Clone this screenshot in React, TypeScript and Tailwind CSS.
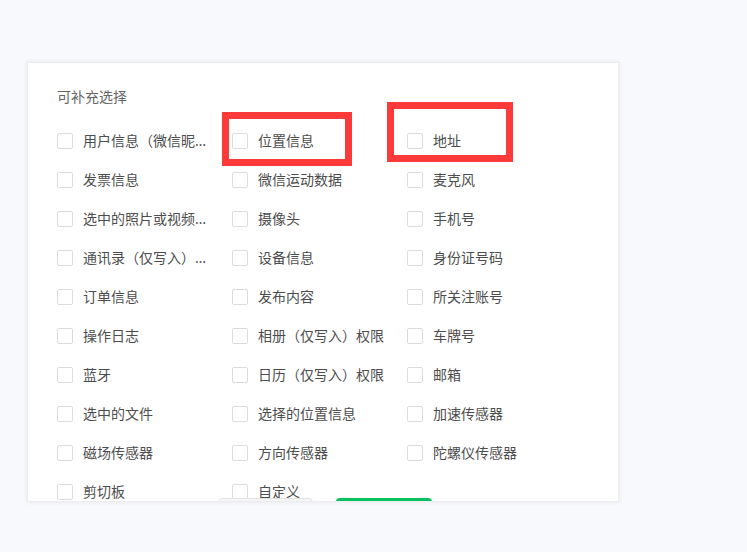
import React from "react";

const items = [
  "用户信息（微信昵称、头像）", "位置信息", "地址",
  "发票信息", "微信运动数据", "麦克风",
  "选中的照片或视频信息", "摄像头", "手机号",
  "通讯录（仅写入）权限", "设备信息", "身份证号码",
  "订单信息", "发布内容", "所关注账号",
  "操作日志", "相册（仅写入）权限", "车牌号",
  "蓝牙", "日历（仅写入）权限", "邮箱",
  "选中的文件", "选择的位置信息", "加速传感器",
  "磁场传感器", "方向传感器", "陀螺仪传感器",
  "剪切板", "自定义",
];

export default function App() {
  return (
    <div
      className="relative w-[747px] h-[552px] bg-[#f8f9fc] overflow-hidden pl-[27px] pt-[62px]"
      style={{ fontFamily: '"Noto Sans", "Noto Sans CJK SC", sans-serif' }}
    >
      <div className="w-[592px] h-[440px] bg-white overflow-hidden shadow-[0_0_5px_rgba(0,0,0,0.08)] border border-[#ededed] pl-[29px] pt-[24px] flex flex-col">
        <div className="text-[14px] leading-[20px] text-[#666]">可补充选择</div>
        <div className="mt-[24px] grid grid-cols-[175px_175px_175px] gap-y-[19px]">
          {items.map((t) => (
            <div key={t} className="flex items-center h-[20px]">
              <span className="w-[16px] h-[16px] shrink-0 rounded-[2px] border border-[#dcdcdc] bg-white" />
              <span className="ml-[10px] max-w-[130px] truncate text-[14px] leading-[20px] text-[#4d4d4d]">
                {t}
              </span>
            </div>
          ))}
        </div>
        <div className="-mt-[4px] flex gap-[23px] pl-[161px]">
          <div className="w-[95px] h-[36px] rounded-[4px] border border-[#e2e2e2] bg-[#f5f5f5]" />
          <div className="w-[96px] h-[36px] rounded-[4px] bg-[#07c160]" />
        </div>
      </div>
      <div className="absolute left-[222px] top-[112px] w-[130px] h-[54px] border-[7px] border-[#fc3a3a]" />
      <div className="absolute left-[387px] top-[102px] w-[126px] h-[60px] border-[7px] border-[#fc3a3a]" />
    </div>
  );
}
